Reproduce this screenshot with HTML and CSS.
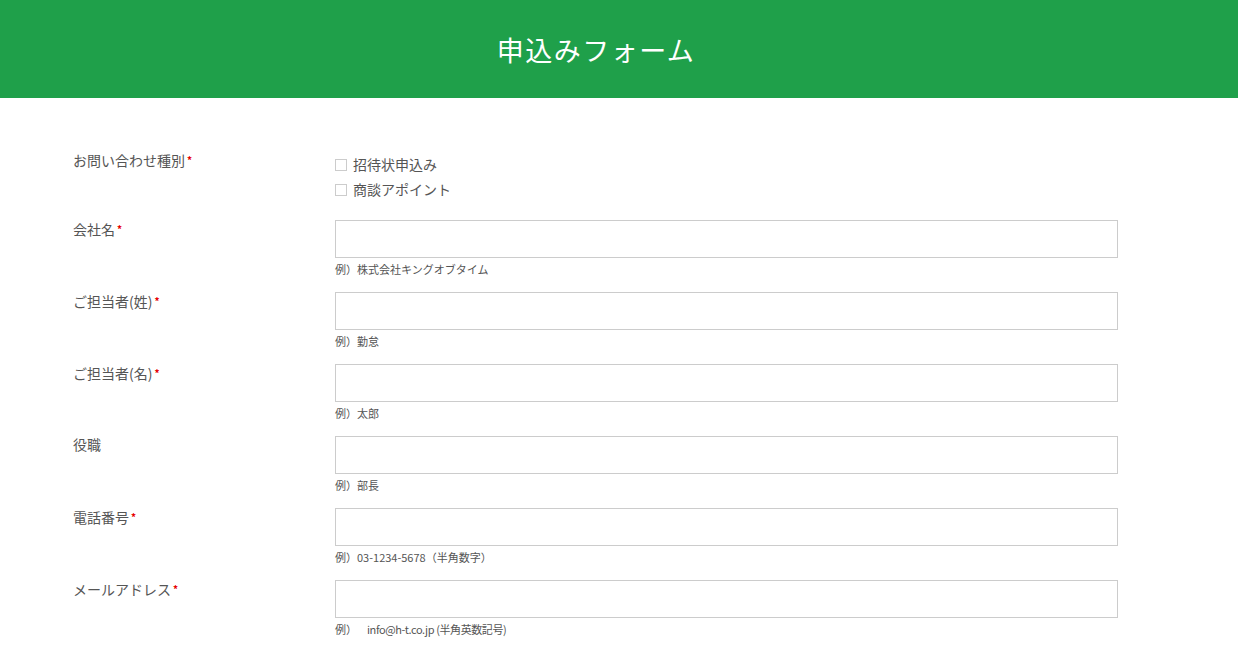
FILE: index.html
```html
<!DOCTYPE html>
<html lang="ja">
<head>
  <meta charset="UTF-8" />
  <meta name="viewport" content="width=device-width, initial-scale=1.0" />
  <title>申込みフォーム</title>
  <link rel="stylesheet" href="styles.css">
</head>
<body>
  <header class="page-header">
    <h1>申込みフォーム</h1>
  </header>

  <form class="entry-form">
    <div class="row row-choice">
      <div class="label">お問い合わせ種別<span class="req">*</span></div>
      <div class="field">
        <label class="option"><span class="box"></span>招待状申込み</label>
        <label class="option"><span class="box"></span>商談アポイント</label>
      </div>
    </div>

    <div class="row">
      <div class="label">会社名<span class="req">*</span></div>
      <div class="field">
        <input type="text" class="text-input">
        <p class="hint">例）株式会社キングオブタイム</p>
      </div>
    </div>

    <div class="row">
      <div class="label">ご担当者(姓)<span class="req">*</span></div>
      <div class="field">
        <input type="text" class="text-input">
        <p class="hint">例）勤怠</p>
      </div>
    </div>

    <div class="row">
      <div class="label">ご担当者(名)<span class="req">*</span></div>
      <div class="field">
        <input type="text" class="text-input">
        <p class="hint">例）太郎</p>
      </div>
    </div>

    <div class="row">
      <div class="label">役職</div>
      <div class="field">
        <input type="text" class="text-input">
        <p class="hint">例）部長</p>
      </div>
    </div>

    <div class="row">
      <div class="label">電話番号<span class="req">*</span></div>
      <div class="field">
        <input type="text" class="text-input">
        <p class="hint">例）03-1234-5678（半角数字）</p>
      </div>
    </div>

    <div class="row">
      <div class="label">メールアドレス<span class="req">*</span></div>
      <div class="field">
        <input type="text" class="text-input">
        <p class="hint">例）<span class="pad"></span><span class="tight">info@h-t.co.jp (半角英数記号)</span></p>
      </div>
    </div>
  </form>
</body>
</html>
```

FILE: styles.css
```css
body {
  margin: 0;
  font-family: "Noto Sans CJK JP", "Noto Sans", sans-serif;
  color: #555;
  background: #fff;
}

.page-header {
  height: 98px;
  background-color: #1fa04a;
  display: flex;
  align-items: center;
  justify-content: center;
}

.page-header h1 {
  margin: 0 46px 0 0;
  color: #fff;
  font-size: 27px;
  font-weight: 400;
  letter-spacing: 1.5px;
}

.entry-form {
  padding: 53px 0 0 73px;
}

.row {
  display: grid;
  grid-template-columns: 262px 783px;
  margin-bottom: 16px;
}

.row-choice {
  margin-bottom: 18px;
}

.label {
  font-size: 14px;
  line-height: 21px;
  margin-top: -2px;
}

.req {
  color: #e60000;
  font-size: 10px;
  font-weight: 700;
  vertical-align: 2px;
  margin-left: 2px;
}

.option {
  display: flex;
  align-items: center;
  font-size: 14px;
  line-height: 25px;
}

.row-choice .field {
  padding-top: 1px;
}

.box {
  width: 10px;
  height: 10px;
  border: 1px solid #ccc;
  margin-right: 6px;
}

.text-input {
  display: block;
  box-sizing: border-box;
  width: 100%;
  height: 38px;
  margin: 0;
  border: 1px solid #ccc;
  border-radius: 0;
  background: #fff;
}

.hint {
  margin: 4px 0 0;
  font-size: 11px;
  line-height: 14px;
}

.pad {
  display: inline-block;
  width: 10px;
}

.tight {
  letter-spacing: -0.4px;
}
```
